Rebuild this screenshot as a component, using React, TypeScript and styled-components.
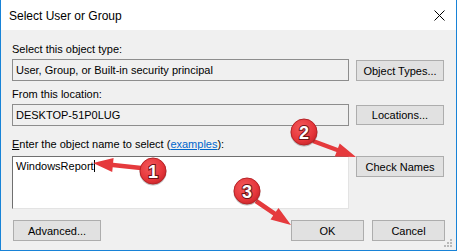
import React, { FC } from 'react'
import styled, { createGlobalStyle } from 'styled-components'

const GlobalStyle = createGlobalStyle`
	html, body {
		margin: 0;
		padding: 0;
		background: #ffffff;
	}
`

type Pt = [number, number]

const arrowPoints = (from: Pt, to: Pt, shaft = 4.5, headLen = 20, headW = 14) => {
	const dx = to[0] - from[0]
	const dy = to[1] - from[1]
	const len = Math.hypot(dx, dy)
	const ux = dx / len
	const uy = dy / len
	const px = -uy
	const py = ux
	const bx = to[0] - ux * headLen
	const by = to[1] - uy * headLen
	const pts: Pt[] = [
		[from[0] + (px * shaft) / 2, from[1] + (py * shaft) / 2],
		[bx + (px * shaft) / 2, by + (py * shaft) / 2],
		[bx + (px * headW) / 2, by + (py * headW) / 2],
		to,
		[bx - (px * headW) / 2, by - (py * headW) / 2],
		[bx - (px * shaft) / 2, by - (py * shaft) / 2],
		[from[0] - (px * shaft) / 2, from[1] - (py * shaft) / 2],
	]
	return pts.map((p) => p.map((v) => v.toFixed(1)).join(',')).join(' ')
}

const marks = [
	{ n: '1', c: [153, 171] as Pt, from: [141, 168] as Pt, to: [93, 163] as Pt },
	{ n: '2', c: [304, 132] as Pt, from: [313, 141] as Pt, to: [356, 157] as Pt },
	{ n: '3', c: [247, 191] as Pt, from: [256, 201] as Pt, to: [291, 225] as Pt },
]

const App: FC = () => {
	return (
		<>
			<GlobalStyle />
			<StyledWindow>
				<StyledTitleBar>
					<StyledTitle>Select User or Group</StyledTitle>
					<StyledClose aria-label="Close">
						<svg width="11" height="11" viewBox="0 0 11 11">
							<path d="M0.5 0.5 L10.5 10.5 M10.5 0.5 L0.5 10.5" stroke="#000" strokeWidth="1" />
						</svg>
					</StyledClose>
				</StyledTitleBar>
				<StyledBody>
					<StyledLabel $bottom={3}>Select this object type:</StyledLabel>
					<StyledRow>
						<StyledReadonly>User, Group, or Built-in security principal</StyledReadonly>
						<StyledButton $offset={1}>Object Types...</StyledButton>
					</StyledRow>
					<StyledLabel $top={7} $bottom={3}>From this location:</StyledLabel>
					<StyledRow>
						<StyledReadonly>DESKTOP-51P0LUG</StyledReadonly>
						<StyledButton $offset={1} $height={20}>Locations...</StyledButton>
					</StyledRow>
					<StyledLabel $top={12} $bottom={5}>
						<u>E</u>nter the object name to select (<StyledLink>examples</StyledLink>):
					</StyledLabel>
					<StyledRow>
						<StyledInput>
							WindowsReport
							<StyledCaret />
						</StyledInput>
						<StyledButton>Check Names</StyledButton>
					</StyledRow>
					<StyledFooter>
						<StyledButton $width={88}>Advanced...</StyledButton>
						<StyledActions>
							<StyledButton $width={73}>OK</StyledButton>
							<StyledButton $width={73}>Cancel</StyledButton>
						</StyledActions>
					</StyledFooter>
				</StyledBody>
				<StyledGrip width="9" height="9" viewBox="0 0 9 9">
					{[
						[6, 0],
						[3, 3],
						[6, 3],
						[0, 6],
						[3, 6],
						[6, 6],
					].map(([x, y], i) => (
						<rect key={i} x={x} y={y} width="2" height="2" fill="#b9b9b9" />
					))}
				</StyledGrip>
			</StyledWindow>
			<StyledOverlay width="457" height="251" viewBox="0 0 457 251">
				<defs>
					<radialGradient id="ball" cx="0.4" cy="0.35" r="0.7">
						<stop offset="0" stopColor="#f45a5c" />
						<stop offset="0.7" stopColor="#e5363a" />
						<stop offset="1" stopColor="#c9262b" />
					</radialGradient>
				</defs>
				{marks.map((m) => (
					<polygon key={'a' + m.n} points={arrowPoints(m.from, m.to)} fill="#e53a3d" />
				))}
				{marks.map((m) => (
					<g key={'c' + m.n}>
						<circle cx={m.c[0]} cy={m.c[1] + 1} r="13.5" fill="rgba(0,0,0,0.25)" />
						<circle cx={m.c[0]} cy={m.c[1]} r="13" fill="url(#ball)" stroke="#b72327" strokeWidth="1" />
						<StyledNum x={m.c[0]} y={m.c[1] + 6.5}>
							{m.n}
						</StyledNum>
					</g>
				))}
			</StyledOverlay>
		</>
	)
}

export default App

const StyledWindow = styled.div`
	position: relative;
	width: 457px;
	height: 251px;
	box-sizing: border-box;
	border: 1px solid #1883d7;
	border-top: none;
	background: #f0f0f0;
	font-family: 'Liberation Sans', Arial, sans-serif;
	font-size: 11px;
	color: #000;
	display: flex;
	flex-direction: column;
`

const StyledTitleBar = styled.div`
	height: 30px;
	flex: none;
	background: #ffffff;
	display: flex;
	align-items: center;
	justify-content: space-between;
	padding-left: 8px;
`

const StyledTitle = styled.div`
	font-size: 12px;
	padding-top: 1px;
`

const StyledClose = styled.div`
	width: 46px;
	height: 30px;
	display: flex;
	align-items: center;
	justify-content: center;
	margin-right: -6px;
`

const StyledBody = styled.div`
	padding: 13px 11px 0 11px;
	display: flex;
	flex-direction: column;
`

const StyledLabel = styled.div<{ $top?: number; $bottom?: number }>`
	line-height: 13px;
	margin-top: ${({ $top }) => $top ?? 0}px;
	margin-bottom: ${({ $bottom }) => $bottom ?? 0}px;
	white-space: nowrap;
`

const StyledLink = styled.span`
	color: #0066cc;
	text-decoration: underline;
`

const StyledRow = styled.div`
	display: grid;
	grid-template-columns: 337px 88px;
	column-gap: 7px;
	align-items: start;
`

const StyledReadonly = styled.div`
	height: 22px;
	box-sizing: border-box;
	border: 1px solid #8d8d8d;
	background: #f0f0f0;
	padding: 0 3px;
	display: flex;
	align-items: center;
	white-space: nowrap;
`

const StyledInput = styled.div`
	height: 53px;
	box-sizing: border-box;
	background: #ffffff;
	border: 1px solid #e3e3e3;
	border-top-color: #6f6f6f;
	border-left-color: #6f6f6f;
	padding: 3px 3px 0 3px;
	line-height: 13px;
	white-space: nowrap;
`

const StyledCaret = styled.span`
	display: inline-block;
	width: 1px;
	height: 12px;
	background: #000;
	vertical-align: -2px;
`

const StyledButton = styled.div<{ $offset?: number; $height?: number; $width?: number }>`
	box-sizing: border-box;
	height: ${({ $height }) => $height ?? 21}px;
	${({ $width }) => ($width ? `width: ${$width}px;` : '')}
	margin-top: ${({ $offset }) => $offset ?? 0}px;
	background: #e1e1e1;
	border: 1px solid #adadad;
	display: flex;
	align-items: center;
	justify-content: center;
	white-space: nowrap;
`

const StyledFooter = styled.div`
	margin-top: 11px;
	padding-left: 1px;
	display: flex;
	justify-content: space-between;
`

const StyledActions = styled.div`
	display: flex;
	gap: 8px;
`

const StyledGrip = styled.svg`
	position: absolute;
	right: 3px;
	bottom: 2px;
`

const StyledOverlay = styled.svg`
	position: absolute;
	left: 0;
	top: 0;
	pointer-events: none;
`

const StyledNum = styled.text`
	font-family: 'Liberation Sans', Arial, sans-serif;
	font-weight: 700;
	font-size: 18px;
	fill: #ffffff;
	stroke: #6e1315;
	stroke-width: 2px;
	paint-order: stroke;
	text-anchor: middle;
`
